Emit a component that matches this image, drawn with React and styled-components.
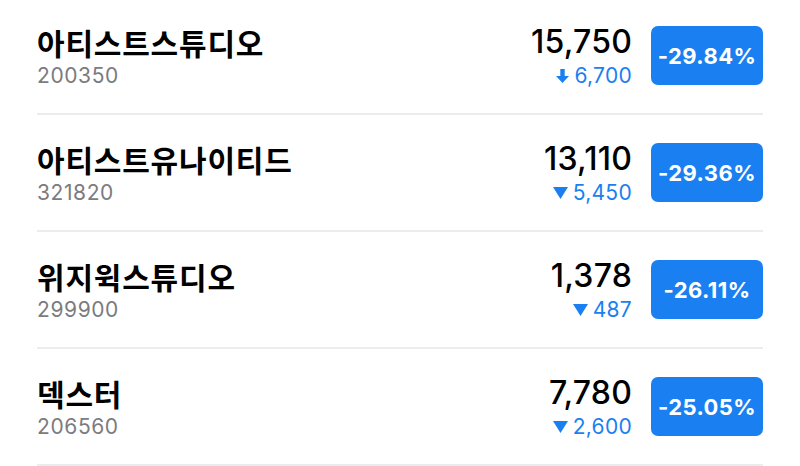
import React from "react";
import styled, { createGlobalStyle } from "styled-components";

const GlobalStyle = createGlobalStyle`
  body {
    margin: 0;
    background: #ffffff;
    font-family: Inter, "Noto Sans CJK KR", sans-serif;
    overflow: hidden;
  }
`;

const List = styled.div`
  margin-top: -2px;
  padding: 0 37px;
`;

const Row = styled.div`
  height: 115px;
  display: flex;
  align-items: center;
  border-bottom: 2px solid #ececee;
`;

const Info = styled.div`
  flex: 1;
  display: flex;
  flex-direction: column;
`;

const Name = styled.div`
  font-family: "Noto Sans CJK KR", sans-serif;
  font-size: 30px;
  font-weight: 700;
  color: #000;
  line-height: 38px;
  letter-spacing: 0.8px;
`;

const Code = styled.div`
  font-size: 21px;
  color: #7b7b80;
  line-height: 26px;
  margin-top: 2px;
  letter-spacing: 0.6px;
`;

const Quote = styled.div`
  display: flex;
  flex-direction: column;
  align-items: flex-end;
  margin-right: 19px;
`;

const Price = styled.div`
  font-size: 32px;
  font-weight: 500;
  color: #000;
  line-height: 38px;
  letter-spacing: 0.2px;
`;

const Change = styled.div`
  display: flex;
  align-items: center;
  gap: 5px;
  font-size: 21px;
  color: #1a7ff0;
  line-height: 26px;
  margin-top: 2px;
  letter-spacing: 0.3px;
`;

const Badge = styled.div`
  width: 112px;
  height: 59px;
  border-radius: 7px;
  background: #1a7ff0;
  color: #fff;
  font-size: 22px;
  font-weight: 700;
  display: flex;
  align-items: center;
  justify-content: center;
  letter-spacing: 0.4px;
`;

const ArrowDown = () => (
  <svg width="13" height="14" viewBox="0 0 13 14">
    <path d="M4.3 0h4.4v7h4.3l-6.5 7-6.5-7h4.3z" fill="#1a7ff0" />
  </svg>
);

const Triangle = () => (
  <svg width="15" height="12" viewBox="0 0 15 12">
    <path d="M0 0h15l-7.5 12z" fill="#1a7ff0" />
  </svg>
);

const stocks = [
  { name: "아티스트스튜디오", code: "200350", price: "15,750", diff: "6,700", rate: "-29.84%", limit: true },
  { name: "아티스트유나이티드", code: "321820", price: "13,110", diff: "5,450", rate: "-29.36%" },
  { name: "위지윅스튜디오", code: "299900", price: "1,378", diff: "487", rate: "-26.11%" },
  { name: "덱스터", code: "206560", price: "7,780", diff: "2,600", rate: "-25.05%" },
];

export default function App() {
  return (
    <>
      <GlobalStyle />
      <List>
        {stocks.map((s) => (
          <Row key={s.code}>
            <Info>
              <Name>{s.name}</Name>
              <Code>{s.code}</Code>
            </Info>
            <Quote>
              <Price>{s.price}</Price>
              <Change>
                {s.limit ? <ArrowDown /> : <Triangle />}
                {s.diff}
              </Change>
            </Quote>
            <Badge>{s.rate}</Badge>
          </Row>
        ))}
      </List>
    </>
  );
}
